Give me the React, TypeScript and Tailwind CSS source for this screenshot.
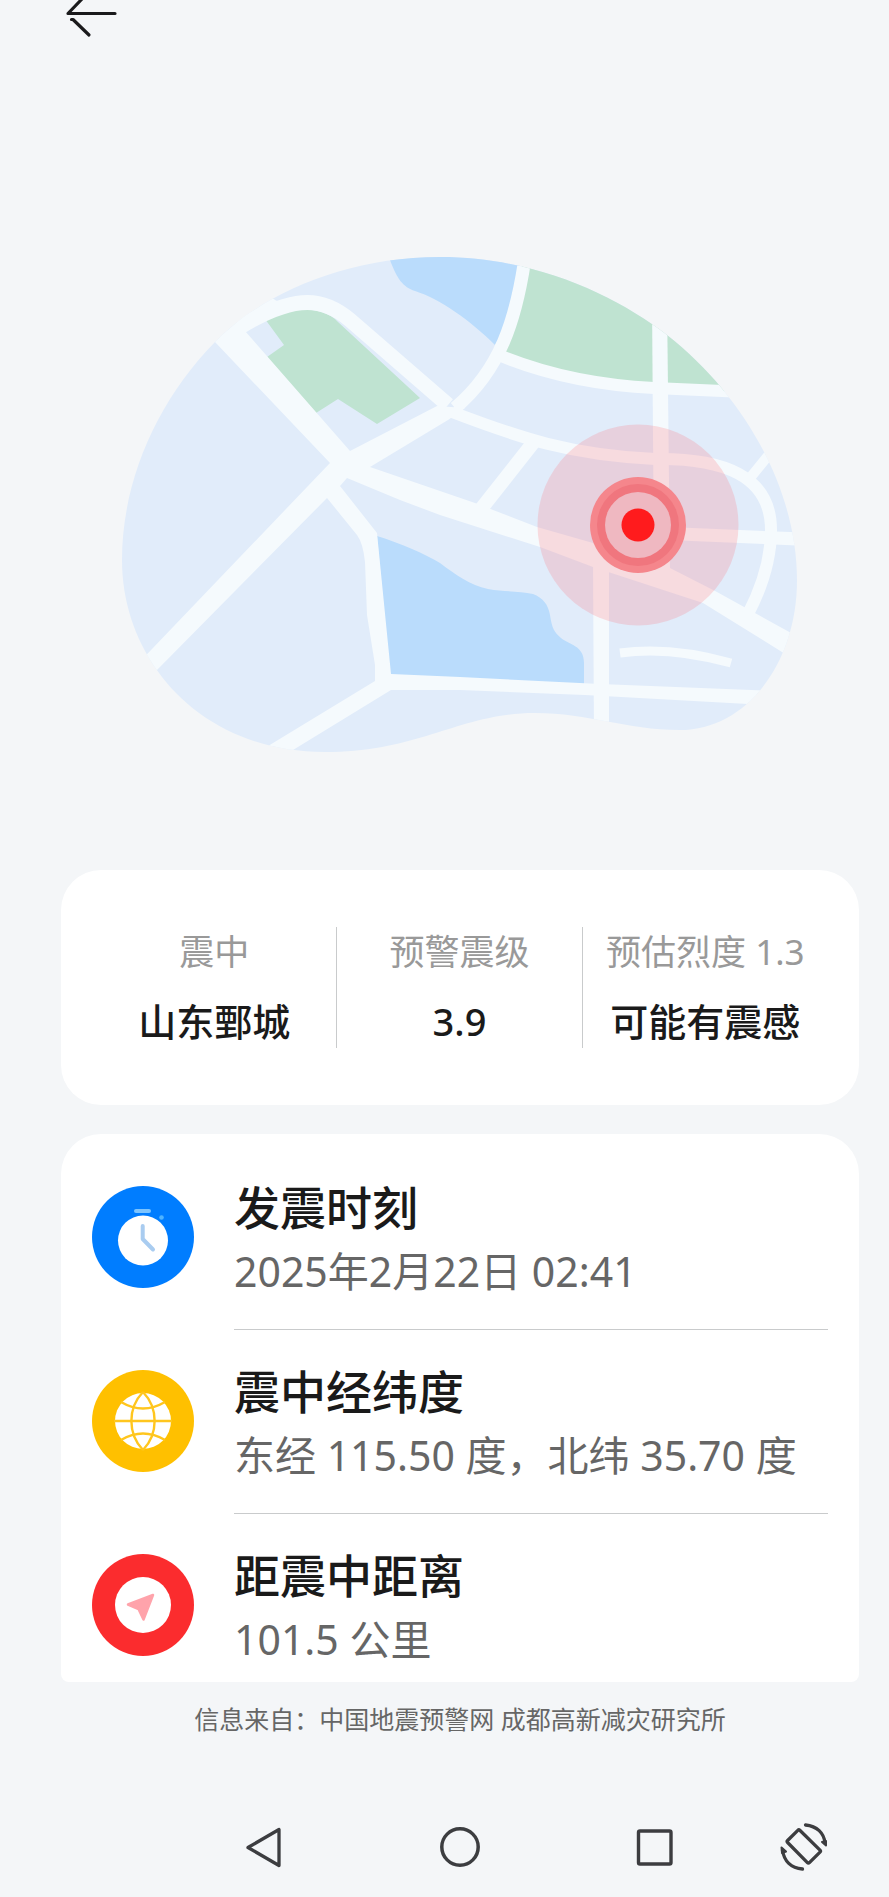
import React from 'react';

interface SummaryItem {
  label: string;
  value: string;
}

interface DetailItem {
  title: string;
  text: string;
  icon: React.ReactNode;
}

const ClockIcon = () => (
  <svg viewBox="0 0 102 102" className="h-full w-full" aria-hidden="true">
    <circle cx="51" cy="51" r="51" fill="#007dff" />
    <rect x="42" y="23" width="17" height="4" rx="2" fill="#7cc4ff" />
    <circle cx="69.5" cy="31.5" r="2.3" fill="#4fb4ff" />
    <circle cx="51" cy="54.5" r="25" fill="#fff" />
    <path d="M50.7 40V53L61 63.5" fill="none" stroke="#a9ccf0" strokeWidth="4" strokeLinecap="round" strokeLinejoin="round" />
  </svg>
);

const GlobeIcon = () => (
  <svg viewBox="0 0 102 102" className="h-full w-full" aria-hidden="true">
    <circle cx="51" cy="51" r="51" fill="#ffc000" />
    <circle cx="51" cy="51" r="28" fill="#fff" />
    <g fill="none" stroke="#ffc61e" strokeWidth="2.4">
      <path d="M22 51H80" />
      <path d="M51 22C35.500 38 35.500 64 51 80" />
      <path d="M51 22C66.500 38 66.500 64 51 80" />
      <path d="M29 32Q51 45 73 32" />
      <path d="M29 70Q51 57 73 70" />
    </g>
  </svg>
);

const DistanceIcon = () => (
  <svg viewBox="0 0 102 102" className="h-full w-full" aria-hidden="true">
    <circle cx="51" cy="51" r="51" fill="#fb2c2e" />
    <circle cx="51" cy="51" r="28" fill="#fff" />
    <path d="M61 41L36 50.500L46.500 55L51.500 65.500Z" fill="#ffa3ab" stroke="#ffa3ab" strokeWidth="2.500" strokeLinejoin="round" />
  </svg>
);

const summary: SummaryItem[] = [
  { label: '震中', value: '山东鄄城' },
  { label: '预警震级', value: '3.9' },
  { label: '预估烈度 1.3', value: '可能有震感' },
];

const details: DetailItem[] = [
  { title: '发震时刻', text: '2025年2月22日 02:41', icon: <ClockIcon /> },
  { title: '震中经纬度', text: '东经 115.50 度，北纬 35.70 度', icon: <GlobeIcon /> },
  { title: '距震中距离', text: '101.5 公里', icon: <DistanceIcon /> },
];

const EpicenterMap = () => (
  <svg viewBox="122 256 677 497" className="mx-auto block h-auto w-[677px] max-w-full" role="img" aria-label="震中位置">
    <defs>
      <clipPath id="map-shape">
        <path d="M122 560C122 480 158 400 215 342C262 294 345 257 440 257C535 257 615 295 667 335C745 396 797 490 797 580C797 665 745 730 680 730C625 730 590 713 535 713C460 713 420 752 325 752C200 752 122 660 122 560Z" />
      </clipPath>
    </defs>
    <g clipPath="url(#map-shape)">
      <rect x="121" y="256" width="677" height="497" fill="#e1ecfa" />

      {/* Water */}
      <g fill="#badcfc">
        <path d="M386 250L390 260C397 279 403 287 415 291C440 299 470 320 495 345L520 300V250Z" />
        <path d="M377 536C400 543 425 554 440 563C456 575 470 585 488 589C505 592 520 591 533 594C543 598 548 604 550 615C552 628 554 632 561 638C569 645 584 645 584 663V684L390 676Z" />
      </g>

      {/* Parks */}
      <g fill="#bfe3d1">
        <path d="M265 319C290 307 322 305 338 322L420 398L377 424L338 399L316 413L267 357L284 345Z" />
        <path d="M525 250L505 352Q570 384 654 388L740 392V250Z" />
      </g>

      {/* Roads */}
      <g fill="#f5fafd">
        <path d="M200 332L272 298L285 306L245 331L350 451L370 467L475 503L537 527L600 545L670 568L717 592L800 638L790 657L703 603L593 567L540 547L440 515L400 500L347 478L340 486L377 533L391 674L460 677L600 684L800 692V706L748 704L585 695L460 690H391L293 750L270 765L250 757L375 681V665L367 615L365 562Q363 543 357 535L327 498L156 671L130 690L130 672L330 463L215 342Z" />
        <path d="M437 406L350 451L345 465L370 467L448 420L465 408Z" />
        <path d="M652 300H667L670 570H654Z" />
        <path d="M593 560H609V740H594Z" />
      </g>
      <g fill="none" stroke="#f5fafd">
        <path d="M240 327C298 292 325 299 350 320L448 405" strokeWidth="15" />
        <path d="M525 258C516 320 500 370 455 408" strokeWidth="13" />
        <path d="M501 356Q570 384 654 388L745 392" strokeWidth="12" />
        <path d="M452 412C520 438 570 455 655 459C722 458 771 475 771 530Q771 570 748 614" strokeWidth="12" />
        <path d="M780 441L750 478" strokeWidth="10" />
        <path d="M680 534L800 539" strokeWidth="13" />
        <path d="M533 443L481 509" strokeWidth="14" />
        <path d="M620 653Q670 646 731 663" strokeWidth="9" />
      </g>
    </g>

    {/* Epicenter marker */}
    <circle cx="638" cy="525" r="100.500" fill="#ff6c78" fillOpacity="0.22" />
    <circle cx="638" cy="525" r="48" fill="#f5868c" />
    <circle cx="638" cy="525" r="41" fill="#f0767e" />
    <circle cx="638" cy="525" r="33" fill="#efb8c1" />
    <circle cx="638" cy="525" r="16.500" fill="#ff1b1d" />
  </svg>
);

const SummaryCard = () => (
  <section className="rounded-[40px] bg-white px-[31px] py-[57px]">
    <dl className="grid grid-cols-3 divide-x divide-[#c9cbcc]">
      {summary.map(item => (
        <div key={item.label} className="whitespace-nowrap text-center">
          <dt className="text-[35px] leading-[50px] text-[#999]">{item.label}</dt>
          <dd className="pt-[17px] text-[38px] font-medium leading-[54px] text-[#1a1a1a]">{item.value}</dd>
        </div>
      ))}
    </dl>
  </section>
);

const DetailCard = () => (
  <section className="mt-[29px] rounded-t-[40px] rounded-b-lg bg-white px-[31px] pt-3">
    <ul>
      {details.map((item, index) => (
        <li key={item.title} className="flex gap-10">
          <div className="mt-10 h-[102px] w-[102px] shrink-0">{item.icon}</div>
          <div
            className={
              index < details.length - 1
                ? 'min-w-0 flex-1 border-b border-[#c9cbcc] pt-[29px] pb-[26px]'
                : 'min-w-0 flex-1 pt-[29px] pb-[11px]'
            }
          >
            <h2 className="text-[46px] font-medium leading-[64px] text-[#1a1a1a]">{item.title}</h2>
            <p className="whitespace-nowrap text-[41px] leading-[64px] text-[#666]">{item.text}</p>
          </div>
        </li>
      ))}
    </ul>
  </section>
);

const NavigationBar = () => (
  <nav className="flex items-center pr-[31px] pl-[179px] text-[#3c3d40]" aria-label="系统导航">
    <div className="flex flex-1 items-center justify-between">
      <button type="button" aria-label="返回" className="h-[50px] w-12">
        <svg viewBox="0 0 48 50" className="h-full w-full" fill="none" stroke="currentColor" strokeWidth="3.300" strokeLinejoin="round">
          <path d="M39 7.500V43.500L8 25.500Z" />
        </svg>
      </button>
      <button type="button" aria-label="主页" className="h-[50px] w-12">
        <svg viewBox="0 0 48 50" className="h-full w-full" fill="none" stroke="currentColor" strokeWidth="3.500">
          <circle cx="24" cy="25" r="18.200" />
        </svg>
      </button>
      <button type="button" aria-label="最近任务" className="h-[50px] w-12">
        <svg viewBox="0 0 48 50" className="h-full w-full" fill="none" stroke="currentColor" strokeWidth="3.400">
          <rect x="7.500" y="9" width="32.500" height="33" rx="1.500" />
        </svg>
      </button>
    </div>
    <button type="button" aria-label="旋转屏幕" className="ml-[101px] h-[50px] w-12">
      <svg viewBox="0 0 48 50" className="h-full w-full" fill="none" stroke="currentColor" strokeWidth="3.300" strokeLinecap="round" strokeLinejoin="round">
        <path d="M17.800 8.300L7.600 18.500Q6.600 19.500 7.600 20.500L27.400 40.700Q28.400 41.700 29.400 40.700L40 30.200Q41 29.200 40 28.200L19.800 8.300Q18.800 7.300 17.800 8.300Z" />
        <path d="M25.500 3C37 4 44 11 45 21" />
        <path d="M22.500 47C11 46 4 39 2.500 28" />
        <path d="M46 23.500L42 20L46 19Z" fill="currentColor" strokeWidth="2" />
        <path d="M1.500 25.500L6 29.500L2 31Z" fill="currentColor" strokeWidth="2" />
      </svg>
    </button>
  </nav>
);

export default function App() {
  return (
    <div className="min-h-screen bg-[#f4f6f8] pr-[30px] pb-[25px] pl-[61px] font-['Noto_Sans','Noto_Sans_CJK_SC',sans-serif]">
      <header className="mb-[216px] h-10">
        <button type="button" aria-label="返回" className="block h-10 w-[60px]">
          <svg viewBox="0 0 60 40" className="h-full w-full" fill="none" stroke="#1a1a1c" strokeWidth="3.200" strokeLinecap="round" strokeLinejoin="round">
            <path d="M54 13.500H7L21 -1" />
            <path d="M10.500 19.500H12L28 35" />
          </svg>
        </button>
      </header>

      <main>
        <EpicenterMap />
        <div className="mt-[117px]">
          <SummaryCard />
          <DetailCard />
        </div>
      </main>

      <footer>
        <p className="mt-4 mb-[82px] text-center text-[25px] leading-[42px] text-[#666]">
          信息来自：中国地震预警网 成都高新减灾研究所
        </p>
        <NavigationBar />
      </footer>
    </div>
  );
}
